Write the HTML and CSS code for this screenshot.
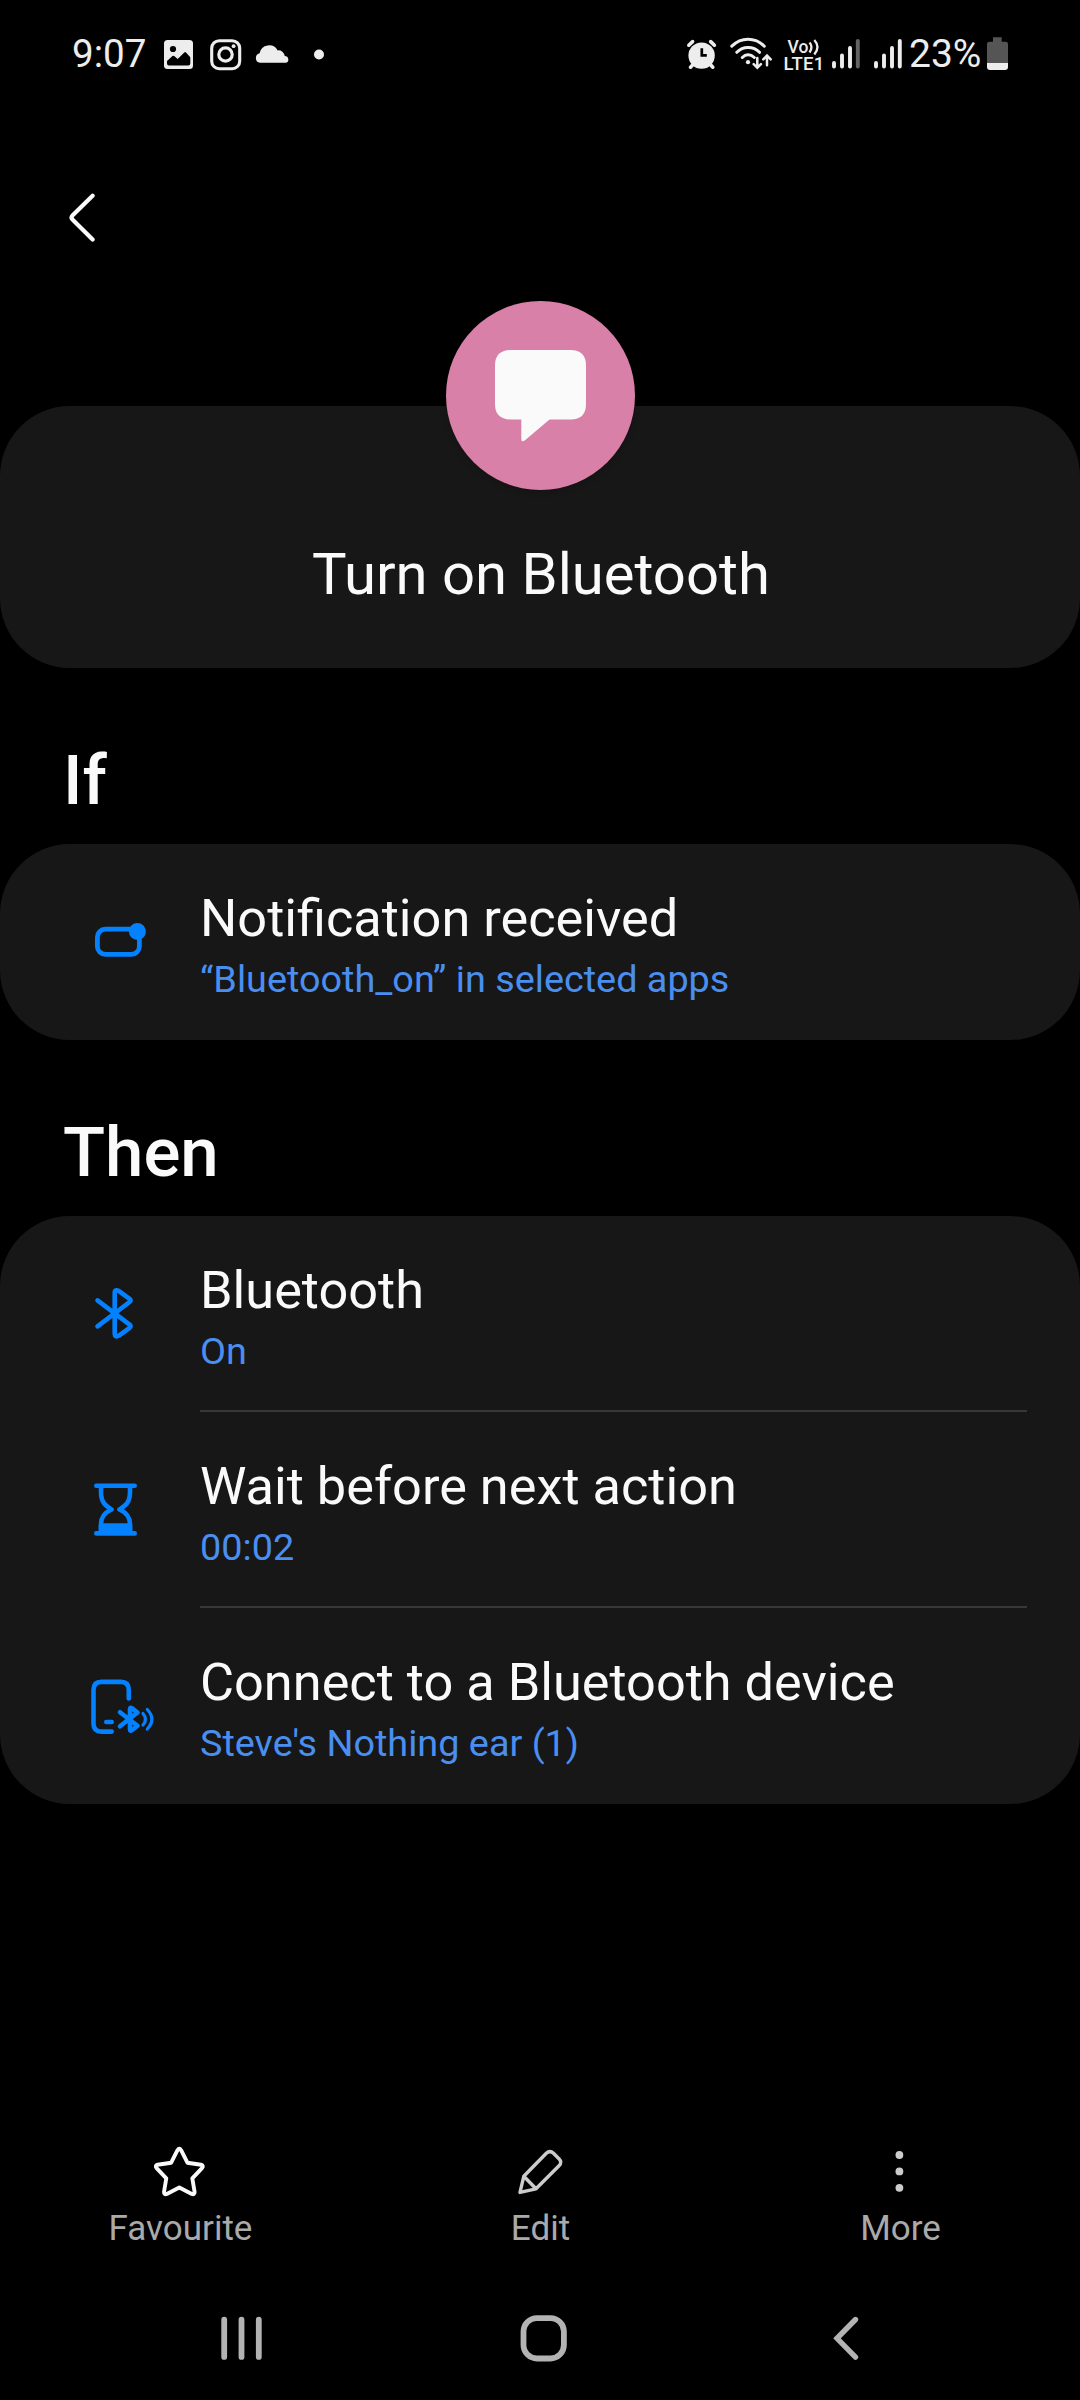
FILE: index.html
```html
<!DOCTYPE html>
<html lang="en">
<head>
<meta charset="utf-8">
<title>Turn on Bluetooth</title>
<link rel="stylesheet" href="styles.css">
</head>
<body>
<div class="screen">
  <div class="status">
    <div class="status-left">
      <span class="clock">9:07</span>
      <svg class="ic-image" width="30" height="34" viewBox="164 37 30 34"><rect x="164" y="40" width="29" height="29" rx="3.5" fill="#ededed"/><circle cx="173" cy="49" r="3.1" fill="#000"/><path d="M167 61 L172.5 56 Q173.5 55.3 174.5 56.2 L177.7 59 L184.3 52.4 Q185.2 51.7 186 52.5 L190.3 57.3 V63.5 Q190.3 65.6 188.2 65.6 H169 Q167 65.6 167 63.5Z" fill="#000"/></svg>
      <svg class="ic-insta" width="32" height="34" viewBox="210 37 32 34"><rect x="211.7" y="40.7" width="28" height="28" rx="7.5" fill="none" stroke="#ededed" stroke-width="3.1"/><circle cx="225.5" cy="54.5" r="6.7" fill="none" stroke="#ededed" stroke-width="3.2"/><circle cx="233.6" cy="46.2" r="1.9" fill="#ededed"/></svg>
      <svg class="ic-cloud" width="36" height="34" viewBox="255 37 36 34"><path d="M260 62.8 A4.9 4.9 0 0 1 259.6 53.2 A9.7 9.7 0 0 1 277.6 50.4 A6.4 6.4 0 0 1 284.8 56 A3.5 3.5 0 0 1 286 62.8Z" fill="#ededed"/></svg>
      <svg class="ic-dot" width="12" height="12" viewBox="0 0 12 12"><circle cx="6" cy="6.5" r="5" fill="#ededed"/></svg>
    </div>
    <div class="status-right">
      <svg class="ic-alarm" width="32" height="40" viewBox="686 34 32 40" stroke="#ededed" stroke-width="3.6" stroke-linecap="round"><circle cx="701.6" cy="55.6" r="13.2" fill="#ededed" stroke="none"/><path d="M688.8 45.2 L692.6 41.6 M710.7 41.6 L714.4 45.2 M693.5 64 L690.5 67.2 M709.8 64 L712.8 67.2"/><path d="M701.8 48.2 V55.4 H706.8" fill="none" stroke="#000" stroke-width="2.7" stroke-linecap="butt"/></svg>
      <svg class="ic-wifi" width="44" height="40" viewBox="730 34 44 40" fill="none" stroke="#ededed" stroke-width="3" stroke-linecap="round"><path d="M731.8 46.2 Q739 39.3 748 39.3 Q757.5 39.3 764.3 46.2 M736.8 52.3 Q741.5 47.5 748 47.5 Q755 47.5 759.5 52.3 M742.3 57.5 Q745 54.8 748 54.8 Q751.5 54.8 754.3 57.5"/><circle cx="748" cy="62.2" r="2.1" fill="#ededed" stroke="none"/><path stroke-width="2.5" d="M757.3 58 V67.3 M753.7 64.2 L757.3 67.8 L760.9 64.2 M767 65.3 V56 M763.3 59.3 L767 55.6 L770.7 59.3"/></svg>
      <svg class="ic-volte" width="42" height="40" viewBox="782 34 42 40"><text class="volte" x="787.6" y="52.5">Vo</text><text class="lte" x="783.5" y="70">LTE1</text><path d="M809.5 42.5 Q813.5 47 809.5 52.5 M814.3 40 Q820.7 47 814.3 54.5" fill="none" stroke="#ededed" stroke-width="2.3"/></svg>
      <svg class="ic-signal" width="28" height="40" viewBox="832 34 28 40" stroke="#ededed" stroke-width="3.9" stroke-linecap="round"><path d="M834 63 V66.5 M842 55.5 V66.5 M850 48 V66.5"/><path d="M857.8 41 V66.5" stroke="#636363"/></svg>
      <svg class="ic-signal2" width="28" height="40" viewBox="832 34 28 40" stroke="#ededed" stroke-width="3.9" stroke-linecap="round"><path d="M834 63 V66.5 M842 55.5 V66.5 M850 48 V66.5 M857.8 41 V66.5"/></svg>
      <span class="percent">23%</span>
      <svg class="ic-battery" width="22" height="40" viewBox="987 34 22 40"><path d="M993 37.3 H1001.7 V41.7 H1005.5 Q1008 41.7 1008 44.2 V63 H987 V44.2 Q987 41.7 989.5 41.7 H993Z" fill="#555"/><path d="M987 63 H1008 V67 Q1008 70 1005 70 H990 Q987 70 987 67Z" fill="#ededed"/></svg>
    </div>
  </div>

  <div class="topbar">
    <svg width="30" height="52" viewBox="68 192 30 52"><path d="M92.6 195.8 L72.7 215.2 Q70.4 217.5 72.7 219.8 L92.6 239.5" fill="none" stroke="#fafafa" stroke-width="4.2" stroke-linecap="round"/></svg>
  </div>

  <div class="card hero">
    <div class="badge">
      <svg width="92" height="92" viewBox="495 350 92 92"><path d="M511 350 H570.5 Q586 350 586 365.5 V404 Q586 419.5 570.5 419.5 H549.5 L525 440.3 Q521.3 443 521.3 438.5 V419.5 H511 Q495 419.5 495 404 V365.5 Q495 350 511 350Z" fill="#fafafa"/></svg>
    </div>
    <h1>Turn on Bluetooth</h1>
  </div>

  <h2>If</h2>
  <div class="card">
    <div class="row">
      <svg class="row-icon" width="80" height="80" viewBox="80 58 80 80"><rect x="97.4" y="85.2" width="42" height="25.2" rx="8" fill="none" stroke="#0381fe" stroke-width="4.8"/><circle cx="137.4" cy="87.5" r="8.5" fill="#0381fe"/></svg>
      <div class="row-text"><div class="name">Notification received</div><div class="detail">“Bluetooth_on” in selected apps</div></div>
    </div>
  </div>

  <h2>Then</h2>
  <div class="card">
    <div class="row">
      <svg class="row-icon" width="80" height="80" viewBox="80 58 80 80" fill="none" stroke="#0381fe" stroke-width="4.6" stroke-linecap="round" stroke-linejoin="round"><path d="M97.5 84.4 L129.6 108.6 Q131.6 110.2 129.6 111.8 L119 119.6 Q114.7 122 114.7 117.5 V77 Q114.7 72.7 119 75.1 L129.6 82.8 Q131.6 84.4 129.6 86 L97.5 110.3"/></svg>
      <div class="row-text"><div class="name">Bluetooth</div><div class="detail">On</div></div>
    </div>
    <div class="row">
      <svg class="row-icon" width="80" height="80" viewBox="80 58 80 80" fill="none" stroke="#0381fe" stroke-width="4.6" stroke-linecap="round" stroke-linejoin="round"><path d="M96.3 73.7 H134.7 M96.3 121.4 H134.7 M101 74 V80 C101 91 106 94 111.5 97.5 C106 100 101 104 101 112 V121 M130 74 V80 C130 91 125 94 119.5 97.5 C125 100 130 104 130 112 V121"/><path d="M101 113.5 H130 V120 H101Z" fill="#0381fe"/></svg>
      <div class="row-text"><div class="name">Wait before next action</div><div class="detail">00:02</div></div>
    </div>
    <div class="row">
      <svg class="row-icon" width="80" height="80" viewBox="80 58 80 80" fill="none" stroke="#0381fe" stroke-width="4.6" stroke-linecap="round" stroke-linejoin="round"><path d="M128.8 90.5 V82 Q128.8 73.9 120.8 73.9 H101.5 Q93.5 73.9 93.5 82 V115.5 Q93.5 123.6 101.5 123.6 H111.7 M106.3 114 H111.7"/><path d="M120 104.2 L137.5 117.8 L131.8 122.3 Q130 123.2 130 121.5 V101 Q130 99 131.8 100.2 L137.5 104.5 L120 118.3"/><path stroke-width="3.2" d="M143 105.5 Q148 111.3 143 117 M147.3 101.5 Q156.5 111.3 147.3 121"/></svg>
      <div class="row-text"><div class="name">Connect to a Bluetooth device</div><div class="detail">Steve's Nothing ear (1)</div></div>
    </div>
  </div>

  <div class="actions">
    <div class="action">
      <svg width="60" height="60" viewBox="0 0 60 60" fill="none" stroke="#fafafa" stroke-width="3.9" stroke-linejoin="round"><path d="M27.5 8.2 Q29.3 5.4 31.1 8.2 L37.4 20.7 L51 22.7 Q54 23.7 52 26.1 L42.3 36.3 L44.6 50 Q44.6 53 41.8 51.9 L29.3 45.4 L16.8 51.9 Q14 53 14 50 L16.3 36.3 L6.6 26.1 Q4.6 23.7 7.6 22.7 L21.2 20.7Z"/></svg>
      <span>Favourite</span>
    </div>
    <div class="action">
      <svg width="60" height="60" viewBox="0 0 60 60" fill="none" stroke="#ccc" stroke-width="3.4" stroke-linejoin="round"><path d="M10 50.4 L13.8 34.3 L36.3 11.3 Q39.9 7.9 43.5 11.3 L49.2 17 Q52.4 20.3 49 23.8 L26 46.8Z M13.8 34.3 L26 46.8"/></svg>
      <span>Edit</span>
    </div>
    <div class="action">
      <svg width="60" height="60" viewBox="0 0 60 60" fill="#ccc"><circle cx="29.4" cy="13" r="3.9"/><circle cx="29.4" cy="29.4" r="3.9"/><circle cx="29.4" cy="45.8" r="3.9"/></svg>
      <span>More</span>
    </div>
  </div>

  <div class="navbar">
    <svg width="60" height="60" viewBox="0 0 60 60" stroke="#b3b3b3" stroke-width="5.8" stroke-linecap="round"><path d="M12.2 11.7 V48.9 M29.5 11.7 V48.9 M46.8 11.7 V48.9"/></svg>
    <svg width="60" height="60" viewBox="0 0 60 60" fill="none" stroke="#b3b3b3" stroke-width="5.8"><rect x="9.5" y="10.1" width="40.4" height="40.4" rx="13.5"/></svg>
    <svg width="60" height="60" viewBox="0 0 60 60" fill="none" stroke="#b3b3b3" stroke-width="5.4" stroke-linecap="round"><path d="M39.5 11.5 L21 30.3 L39.5 49.1"/></svg>
  </div>
</div>
</body>
</html>
```
FILE: styles.css
```css
* { box-sizing: border-box; }
body { margin: 0; background: #000; }
svg { display: block; flex: none; }

.screen {
  width: 1080px;
  height: 2400px;
  display: flex;
  flex-direction: column;
  background: #000;
  color: #fafafa;
  font-family: Roboto, sans-serif;
}

.status {
  height: 108px;
  padding: 0 71px 0 72px;
  display: flex;
  justify-content: space-between;
  align-items: center;
  color: #ededed;
  font-size: 38.6px;
  line-height: 46px;
}
.status-left, .status-right { display: flex; align-items: center; }
.clock { width: 92px; }
.ic-insta { margin-left: 16px; }
.ic-cloud { margin-left: 13px; }
.ic-dot { margin-left: 22px; }
.ic-wifi { margin-left: 12px; }
.ic-volte { margin-left: 8px; }
.ic-signal { margin-left: 8px; }
.ic-signal2 { margin-left: 14px; }
.percent { width: 77px; padding-left: 7px; font-size: 39px; white-space: nowrap; }
.ic-battery { margin-left: 8px; }
.volte { font: 500 17.5px Roboto, sans-serif; fill: #ededed; }
.lte { font: 500 18.5px Roboto, sans-serif; letter-spacing: 0.3px; fill: #ededed; }

.topbar { height: 298px; padding: 84px 0 0 68px; }

.card { border-radius: 70px; background: #171717; }
.hero { height: 262px; padding-top: 134px; position: relative; }
.badge {
  position: absolute;
  left: 446px;
  top: -105px;
  width: 189px;
  height: 189px;
  display: flex;
  align-items: center;
  justify-content: center;
  border-radius: 50%;
  background: #d980a8;
  box-shadow: 0 2px 6px rgba(0, 0, 0, 0.2);
}
h1 {
  margin: 0;
  padding-left: 2px;
  font-size: 58px;
  font-weight: 400;
  line-height: 68px;
  text-align: center;
}
h2 {
  margin: 73px 0 23px;
  padding-left: 63px;
  font-size: 69px;
  font-weight: 500;
  line-height: 80px;
}

.row { height: 196px; display: flex; align-items: center; padding: 0 53px 0 80px; }
.row-text { flex: 1; height: 196px; margin-left: 40px; padding-top: 44px; }
.row:not(:last-child) .row-text { border-bottom: 2px solid #373737; }
.name { font-size: 52.3px; line-height: 60px; }
.detail { margin-top: 6px; font-size: 37.8px; line-height: 50px; color: #4a8ff0; }

.actions {
  margin-top: auto;
  display: grid;
  grid-template-columns: repeat(3, 1fr);
  justify-items: center;
}
.action {
  display: flex;
  flex-direction: column;
  align-items: center;
  gap: 7px;
  font-size: 35px;
  line-height: 40px;
  color: #aaa;
}
.action span { padding-left: 1px; }

.navbar {
  height: 151px;
  padding: 59px 0 0 91px;
  display: grid;
  grid-template-columns: repeat(3, 302px);
  justify-items: center;
}
```
